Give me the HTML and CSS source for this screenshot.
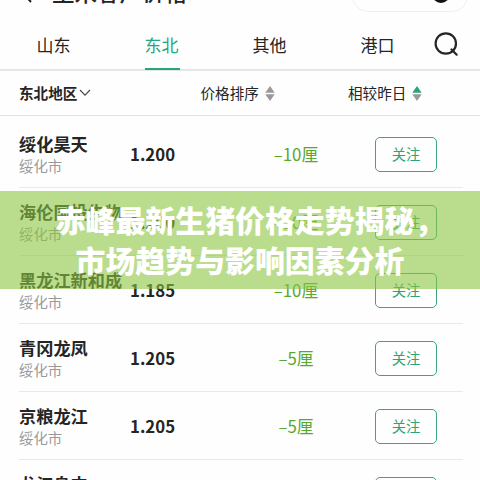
FILE: index.html
```html
<!DOCTYPE html>
<html lang="zh-CN">
<head>
<meta charset="utf-8">
<title>玉米客户价格</title>
<link rel="stylesheet" href="styles.css">
</head>
<body>
<div class="screen">
  <header class="titlebar">
    <svg class="back" width="14" height="24" viewBox="0 0 14 24" fill="none" stroke="#222" stroke-width="2"><path d="M12 2 3 12l9 10"/></svg>
    <h1>玉米客户价格</h1>
    <div class="capsule"><span class="target"></span></div>
  </header>
  <nav class="tabs">
    <span class="tab">山东</span><span class="tab active">东北</span><span class="tab">其他</span><span class="tab">港口</span>
    <svg class="search" width="26" height="26" viewBox="0 0 26 26" fill="none" stroke="#252525" stroke-width="2.2" stroke-linecap="round"><circle cx="11.8" cy="11.5" r="10.2"/><path d="m17.5 17.5 5.2 5.2"/></svg>
  </nav>
  <div class="filters">
    <div class="region">东北地区<svg width="12" height="8" viewBox="0 0 12 8" fill="none" stroke="#444" stroke-width="1.1"><path d="m1 1 5 5.2L11 1"/></svg></div>
    <div class="sort price-sort">价格排序<svg width="10" height="15" viewBox="0 0 10 15" fill="#999"><path d="M5 0l4.7 6.7H.3zM5 15l4.7-6.7H.3z"/></svg></div>
    <div class="sort day-sort">相较昨日<svg width="10" height="15" viewBox="0 0 10 15" fill="#999"><path fill="#2aa57b" d="M5 0l4.7 6.7H.3z"/><path d="M5 15l4.7-6.7H.3z"/></svg></div>
  </div>
  <main class="list">
    <div class="row"><div class="firm"><b>绥化昊天</b><small>绥化市</small></div><strong>1.200</strong><span class="change">–10厘</span><button>关注</button></div>
    <div class="row"><div class="firm"><b>海伦国投生物</b><small>绥化市</small></div><strong>1.200</strong><span class="change">–10厘</span><button>关注</button></div>
    <div class="row"><div class="firm"><b>黑龙江新和成</b><small>绥化市</small></div><strong>1.185</strong><span class="change">–10厘</span><button>关注</button></div>
    <div class="row"><div class="firm"><b>青冈龙凤</b><small>绥化市</small></div><strong>1.205</strong><span class="change">–5厘</span><button>关注</button></div>
    <div class="row"><div class="firm"><b>京粮龙江</b><small>绥化市</small></div><strong>1.205</strong><span class="change">–5厘</span><button>关注</button></div>
    <div class="row"><div class="firm"><b>龙江阜丰</b><small>齐齐哈尔市</small></div><strong>1.205</strong><span class="change">–5厘</span><button>关注</button></div>
  </main>
  <div class="banner"><div class="first">赤峰最新生猪价格走势揭秘，</div><div>市场趋势与影响因素分析</div></div>
</div>
</body>
</html>
```
FILE: styles.css
```css
* { box-sizing: border-box; }
body { margin: 0; background: #fefefe; font-family: "Noto Sans CJK SC", sans-serif; color: #252525; }
.screen { position: relative; width: 480px; height: 480px; overflow: hidden; }
.titlebar { height: 40px; margin-top: -20px; display: flex; padding-left: 19px; }
.back { flex: none; }
h1 { margin: -4px 0 0 19px; width: 300px; font-size: 22.5px; line-height: 30px; font-weight: 500; white-space: nowrap; }
.capsule { width: 116px; height: 32px; border: 1.5px solid #f0f0f0; border-radius: 16px; position: relative; flex: none; }
.target { position: absolute; right: 17px; top: 4px; width: 18px; height: 18px; border: 4px solid #111; border-radius: 50%; }
.tabs { height: 51px; border-bottom: 2px solid #e6e6e6; display: grid; grid-template-columns: 108px 108px 108px 108px 48px; align-items: start; }
.tab { justify-self: center; height: 50px; width: 35px; padding-top: 12px; font-size: 17px; line-height: 25px; white-space: nowrap; }
.tab.active { color: #25a57c; border-bottom: 2px solid #25a57c; }
.search { margin: 12px 0 0 2px; }
.filters { height: 45px; border-bottom: 1px solid #e2e2e2; display: grid; grid-template-columns: 181.5px 147.5px 1fr; align-items: center; padding: 0 0 0 19px; font-size: 14.6px; line-height: 20px; }
.filters > div { display: flex; align-items: center; }
.region { font-weight: 700; }
.region svg { margin-left: 2px; }
.sort svg { margin-left: 6px; }
.list { margin: 4px 17px 0 19px; }
.row { height: 68px; display: grid; grid-template-columns: 111px 106px 120px 62px; align-items: center; border-bottom: 1px solid #e9e9e9; }
.firm { white-space: nowrap; }
.firm b { display: block; font-size: 17.2px; line-height: 24px; font-weight: 700; }
.firm small { display: block; font-size: 14.4px; line-height: 19px; color: #999; }
.row strong { font-size: 16.8px; font-weight: 700; }
.change { justify-self: center; color: #58a82e; font-size: 16.8px; }
button { width: 62px; height: 35px; margin: 1px 0 0 19px; padding: 0 0 2px; background: transparent; border: 1.5px solid #3da582; border-radius: 5px; color: #2aa57b; font: 14.3px "Noto Sans CJK SC", sans-serif; }
.banner { position: absolute; left: 0; top: 191px; width: 480px; height: 98px; background: rgba(140, 197, 65, .6); color: #fff; text-align: center; font-size: 29.9px; line-height: 40px; font-weight: 900; padding-top: 8px; white-space: nowrap; }
.first { padding-left: 20px; }
```
